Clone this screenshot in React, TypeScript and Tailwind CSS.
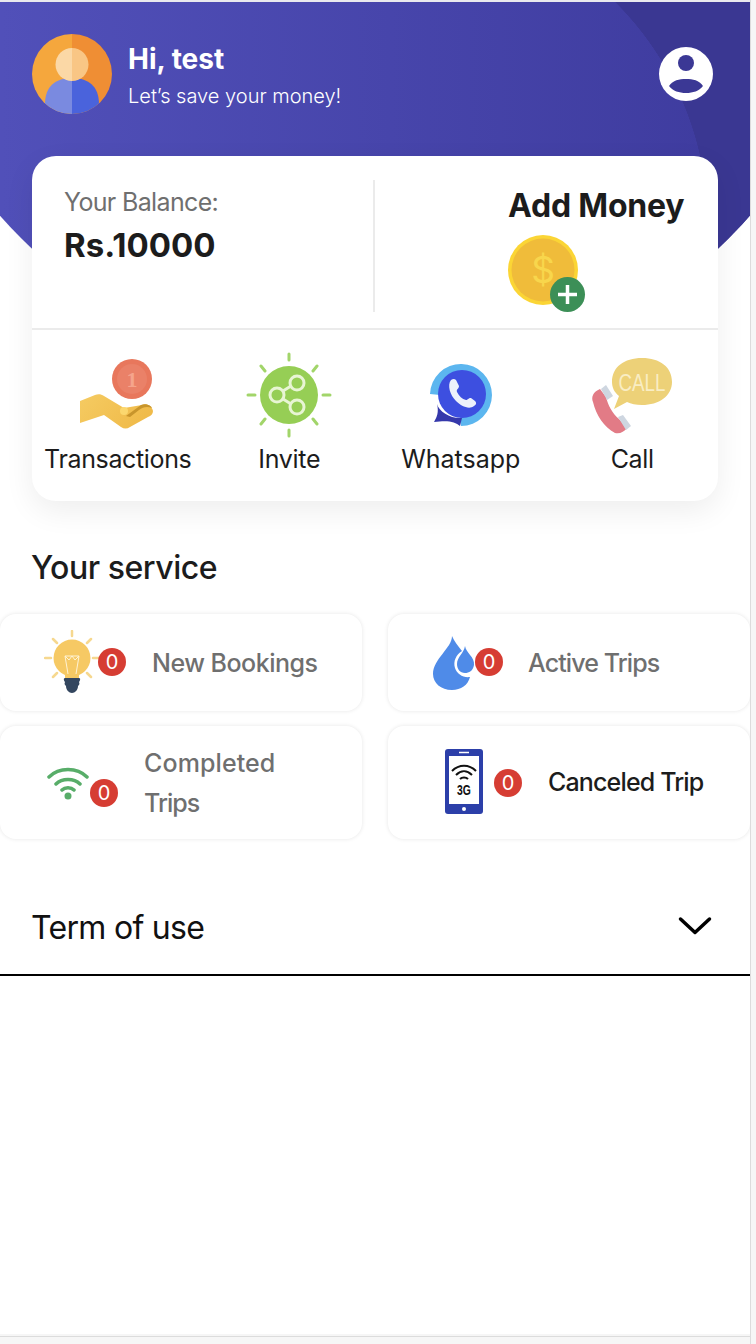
import React from "react";

const Badge = ({ className = "" }: { className?: string }) => (
  <span className={`flex h-7 w-7 shrink-0 items-center justify-center rounded-full bg-[#d63d33] text-[20px] leading-none text-white ${className}`}>0</span>
);

const Avatar = () => (
  <svg width="80" height="80" viewBox="0 0 80 80" className="shrink-0">
    <defs><clipPath id="av"><circle cx="40" cy="40" r="40" /></clipPath></defs>
    <g clipPath="url(#av)">
      <rect width="40" height="80" fill="#f5a73d" />
      <rect x="40" width="40" height="80" fill="#ef8e34" />
      <path d="M13 70C13 52 24 44 40 44V80H13Z" fill="#7a8ae0" />
      <path d="M67 70C67 52 56 44 40 44V80H67Z" fill="#4a63dc" />
      <path d="M40 14a16.500 16.500 0 0 0 0 33Z" fill="#fbd8a6" />
      <path d="M40 14a16.500 16.500 0 0 1 0 33Z" fill="#f9c685" />
    </g>
  </svg>
);

const UserIcon = () => (
  <svg width="54" height="54" viewBox="0 0 54 54" className="shrink-0">
    <circle cx="27" cy="27" r="27" fill="#fff" />
    <circle cx="27" cy="16" r="8" fill="#3b3895" />
    <path d="M10 39C14 33 20 32 27 32S40 33 44 39C40 44 34 46 27 46S14 44 10 39Z" fill="#3b3895" />
  </svg>
);

const Coin = () => (
  <svg width="78" height="78" viewBox="0 0 78 78">
    <circle cx="35" cy="35" r="35" fill="#fbd535" />
    <circle cx="35" cy="35" r="31.500" fill="#f0bc3a" />
    <text x="35" y="48" fontSize="37" textAnchor="middle" fill="#f8d64c" fontFamily="Inter, sans-serif">$</text>
    <circle cx="59.500" cy="59.500" r="17.500" fill="#3c8f57" />
    <path d="M59.500 50V69M50 59.500H69" stroke="#fff" strokeWidth="3.500" />
  </svg>
);

const HandIcon = () => (
  <svg width="76" height="72" viewBox="0 0 76 72">
    <defs>
      <linearGradient id="hand" x1="0" y1="0" x2="1" y2="0.4">
        <stop offset="0" stopColor="#f5cb62" />
        <stop offset="1" stopColor="#f0bb4a" />
      </linearGradient>
    </defs>
    <circle cx="52" cy="20" r="20" fill="#e8775c" />
    <circle cx="52" cy="20" r="15" fill="#ea8168" />
    <text x="52" y="28" fontSize="22" fontWeight="700" textAnchor="middle" fill="#f5a48c" fontFamily="Liberation Serif, serif">1</text>
    <path d="M0 42L15 36C18 35 21 35 24 37L44 49L62 46C66 44 72 47 73 52C73 55 71 57 68 58L50 68C47 70 44 70 41 68L24 56L0 64Z" fill="url(#hand)" />
    <path d="M46 57L61 46C65 44 71 46 72 49C67 47 63 48 59 51L50 58Z" fill="#c8952c" />
    <circle cx="44" cy="52" r="4" fill="#fbd76e" />
  </svg>
);

const InviteIcon = () => (
  <svg width="86" height="86" viewBox="0 0 86 86">
    <g stroke="#a2d56a" strokeWidth="3" strokeLinecap="round">
      <path d="M43 2V8M43 78V84M2 43H9M77 43H84M15 14L19 19M71 14L67 19M15 72L19 67M71 72L67 67" />
    </g>
    <circle cx="43" cy="43" r="29" fill="#96ce55" />
    <g fill="none" stroke="#e8f5d4" strokeWidth="3">
      <circle cx="31" cy="43" r="7" />
      <circle cx="51" cy="31" r="7" />
      <circle cx="51" cy="55" r="7" />
      <path d="M37 39L45 34M37 47L45 52" />
    </g>
  </svg>
);

const WhatsappIcon = () => (
  <svg width="64" height="64" viewBox="0 0 64 64">
    <path d="M1 30A31 31 0 1 1 32 62L31 53A21 21 0 1 0 11 31Z" fill="#5cb6ef" />
    <circle cx="33" cy="30" r="24" fill="#3d4fe0" />
    <path d="M8 40C10 48 22 55 33 54L31 62C26 58 20 56 5 58C8 53 10 48 8 40Z" fill="#3538ab" />
    <path d="M22 16C25 14 27 15 28 18L30 22C30 25 27 25 28 28C30 32 33 35 37 36C39 36 39 34 42 34L46 37C48 39 47 41 45 42C40 46 32 42 27 37C21 31 18 21 22 16Z" fill="#edf1fb" />
  </svg>
);

const CallIcon = () => (
  <svg width="84" height="80" viewBox="0 0 84 80">
    <g transform="translate(0 3)">
      <path d="M52 0C70 0 82 9 82 24C82 38 69 47 52 47C46 47 41 46 37 44L24 51L29 38C24 34 22 29 22 24C22 9 34 0 52 0Z" fill="#edd178" />
      <text transform="translate(52 33) scale(0.78 1)" fontSize="24" textAnchor="middle" fill="#f9edc3" fontFamily="Liberation Sans, sans-serif">CALL</text>
    </g>
    <path d="M10 34C3 37 1 42 3 47C6 60 14 72 25 78C30 79 34 77 37 73L29 64C22 58 18 50 16 42Z" fill="#e27b86" />
    <path d="M11 34L16 30L23 41L17 45ZM28 62L33 60L41 71L36 75Z" fill="#ced6e0" />
  </svg>
);

const BulbIcon = () => (
  <svg width="56" height="66" viewBox="0 0 56 66">
    <g stroke="#f6d88f" strokeWidth="2.500" strokeLinecap="round">
      <path d="M28 1V6M1 28H7M49 28H55M9 9L13 13M47 9L43 13M9 47L13 43M47 47L43 43" />
    </g>
    <circle cx="28" cy="28" r="18.500" fill="#f6c964" />
    <path d="M21 44H35V50H21Z" fill="#f6c964" />
    <path d="M24 44L21 26H35L32 44M21 26L25 30L28 26L31 30L35 26" stroke="#fff3d4" strokeWidth="1" fill="none" />
    <path d="M21 48H35C37 48 36 51 35 52C36 54 35 55 34 56C34 60 31 63 28 63S22 60 22 56C21 55 20 54 21 52C20 51 19 48 21 48Z" fill="#33465f" />
  </svg>
);

const DropIcon = () => (
  <svg width="42" height="54" viewBox="0 0 42 54">
    <path d="M19 0C19 12 0 23 0 38C0 47 8 54 19 54C28 54 35 49 37 41C30 42 24 38 22 32C20 25 23 19 29 15C25 10 21 5 19 0Z" fill="#4f8be8" />
    <path d="M32 10C33 17 42 21 41 29C40 35 36 37 32 37C27 37 24 33 24 28C24 21 31 17 32 10Z" fill="#4f8be8" />
  </svg>
);

const WifiIcon = () => (
  <svg width="42" height="34" viewBox="0 0 42 34" fill="none">
    <path d="M2 11C12 1 30 1 40 11M9 18C15 12 27 12 33 18M15 24C18 21 24 21 27 24" stroke="#58ad69" strokeWidth="3.500" strokeLinecap="round" />
    <circle cx="21" cy="30" r="3.500" fill="#58ad69" />
  </svg>
);

const PhoneIcon = () => (
  <svg width="38" height="65" viewBox="0 0 38 65" className="-translate-y-[1px]">
    <rect width="38" height="65" rx="3" fill="#2c3fa9" />
    <rect x="4" y="7" width="30" height="48" fill="#fff" />
    <path d="M14 3.500H24" stroke="#fff" strokeWidth="1.500" />
    <circle cx="19" cy="60" r="2" fill="#fff" />
    <path d="M7 22C14 15 24 15 31 22M11 26C16 21 22 21 27 26M15 30C17 28 21 28 23 30" stroke="#111" strokeWidth="2" fill="none" />
    <text transform="translate(19 46) scale(0.8 1.1)" fontSize="13" fontWeight="700" textAnchor="middle" fill="#111" fontFamily="Liberation Sans, sans-serif">3G</text>
  </svg>
);

const Action = ({ icon, label, className = "" }: { icon: React.ReactNode; label: string; className?: string }) => (
  <div className="flex flex-col items-center">
    <div className="flex h-[88px] items-center justify-center">{icon}</div>
    <span className={`mt-[2px] text-[25px] leading-[36px] text-[#1c1c1c] ${className}`}>{label}</span>
  </div>
);

export default function App() {
  return (
    <div className="relative h-[1344px] w-[756px] overflow-hidden bg-[#f6f6f6] font-['Inter',sans-serif]">
      <div className="relative h-[1334px] w-[750px] border-t-2 border-t-[#e9e9ee] bg-white">
        <div className="absolute inset-x-0 top-0 h-[390px] bg-gradient-to-r from-[#5150b9] to-[#3e3b9e] [clip-path:circle(500px_at_375px_-117px)]">
          <div className="absolute bottom-0 left-[393px] right-0 top-0 bg-[radial-gradient(circle_315px_at_0_223px,transparent_314.5px,#3a3792_315px)]" />
        </div>
        <div className="relative">
          <header className="flex items-center justify-between pl-8 pr-[37px] pt-8">
            <div className="flex items-center gap-4">
              <Avatar />
              <div className="flex flex-col text-white">
                <span className="text-[28px] font-bold leading-[44px]">Hi, test</span>
                <span className="text-[20px] font-light leading-[30px]">Let’s save your money!</span>
              </div>
            </div>
            <UserIcon />
          </header>

          <section className="mx-8 mt-[42px] rounded-3xl bg-white shadow-[0_10px_30px_rgba(0,0,0,0.07)]">
            <div className="flex h-[174px] border-b-2 border-[#ebebeb]">
              <div className="mt-6 h-[132px] w-[343px] border-r-2 border-[#ebebeb] pl-8 pt-[5px]">
                <p className="text-[25px] leading-[34px] tracking-[-0.65px] text-[#6f6f6f]">Your Balance:</p>
                <p className="mt-[5px] text-[33px] font-bold leading-[42px] text-[#1c1c1c]">Rs.10000</p>
              </div>
              <div className="flex-1 pl-[133px] pt-[28px]">
                <p className="whitespace-nowrap text-[32px] font-bold leading-[44px] tracking-[-0.2px] text-[#1c1c1c]">Add Money</p>
                <div className="mt-[7px]"><Coin /></div>
              </div>
            </div>
            <div className="grid h-[171px] grid-cols-4 px-0 pt-[21px]">
              <Action icon={<HandIcon />} label="Transactions" className="tracking-[-0.35px]" />
              <Action icon={<InviteIcon />} label="Invite" className="tracking-[-0.3px]" />
              <Action icon={<div className="translate-y-[1px]"><WhatsappIcon /></div>} label="Whatsapp" className="tracking-[0px]" />
              <Action icon={<CallIcon />} label="Call" className="tracking-[-0.3px]" />
            </div>
          </section>

          <h2 className="ml-[31px] mt-[47px] text-[32px] font-medium leading-[40px] tracking-[-0.45px] text-[#1c1c1c]">Your service</h2>

          <div className="mt-[26px] grid grid-cols-[362px_362px] gap-x-[26px] gap-y-[15px] text-[25px] text-[#6f6f6f]">
            <div className="flex h-[97px] items-center rounded-2xl bg-white pl-[44px] shadow-[0_0_4px_rgba(0,0,0,0.1)]">
              <BulbIcon />
              <Badge className="ml-[-2px] -translate-y-[1px]" />
              <span className="ml-[26px] translate-y-[1px] font-medium tracking-[-0.5px]">New Bookings</span>
            </div>
            <div className="flex h-[97px] items-center rounded-2xl bg-white pl-[45px] shadow-[0_0_4px_rgba(0,0,0,0.1)]">
              <DropIcon />
              <Badge className="-translate-y-[1px]" />
              <span className="ml-[25px] translate-y-[1px] font-medium tracking-[-0.9px]">Active Trips</span>
            </div>
            <div className="flex h-[113px] items-center rounded-2xl bg-white pl-[47px] shadow-[0_0_4px_rgba(0,0,0,0.1)]">
              <WifiIcon />
              <Badge className="ml-[1px] translate-y-[10px]" />
              <span className="ml-[26px] w-[170px] font-medium leading-[40px]">
                <span className="block tracking-[0.1px]">Completed</span>
                <span className="block tracking-[-1px]">Trips</span>
              </span>
            </div>
            <div className="flex h-[113px] items-center rounded-2xl bg-white pl-[57px] shadow-[0_0_4px_rgba(0,0,0,0.1)]">
              <PhoneIcon />
              <Badge className="ml-[11px]" />
              <span className="ml-[26px] whitespace-nowrap font-medium tracking-[-0.85px] text-[#1c1c1c]">Canceled Trip</span>
            </div>
          </div>

          <div className="mt-[36px] flex h-[101px] items-center justify-between border-b-2 border-black pl-[31px] pr-[38px]">
            <span className="translate-y-[3px] text-[32px] leading-10 tracking-[-0.7px] text-[#111]">Term of use</span>
            <svg width="34" height="20" viewBox="0 0 34 20" fill="none" className="translate-y-[1px]">
              <path d="M2.500 3L17 16.500L31.500 3" stroke="#000" strokeWidth="3.500" strokeLinecap="round" strokeLinejoin="round" />
            </svg>
          </div>
        </div>
      </div>
      <div className="absolute bottom-0 right-0 top-0 w-[6px] border-l border-[#dcdcdc] bg-[#f6f6f6]" />
      <div className="absolute bottom-[7px] left-0 h-px w-[750px] bg-[#dcdcdc]" />
    </div>
  );
}
